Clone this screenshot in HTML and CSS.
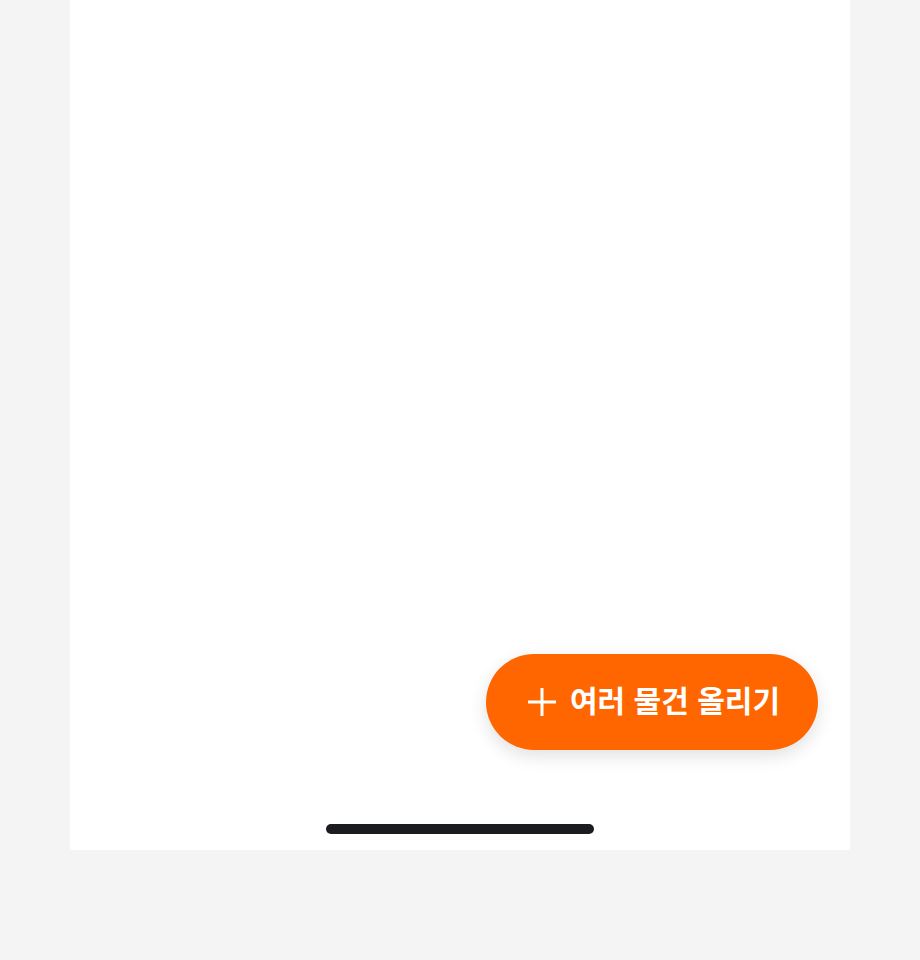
FILE: index.html
```html
<!DOCTYPE html>
<html lang="ko">
<head>
<meta charset="utf-8">
<link rel="stylesheet" href="styles.css">
</head>
<body>
<div class="frame">
  <div class="content"></div>
  <div class="fab-row">
    <button class="fab">
      <svg class="plus" width="30" height="30" viewBox="0 0 30 30"><path d="M15 1V29M1 15H29" stroke="#fff" stroke-width="3" fill="none"/></svg>
      <span class="fab-label">여러 물건 올리기</span>
    </button>
  </div>
  <div class="home-bar"><div class="home-indicator"></div></div>
</div>
</body>
</html>
```
FILE: styles.css
```css
html, body { margin: 0; padding: 0; }
body {
  background: #f4f4f4;
  font-family: "Noto Sans CJK KR", "Noto Sans", sans-serif;
}
.frame {
  width: 780px;
  height: 850px;
  margin: 0 auto;
  background: #fff;
  display: flex;
  flex-direction: column;
}
.content { flex: 1; }
.fab-row {
  display: flex;
  justify-content: flex-end;
  padding-right: 32px;
}
.fab {
  height: 96px;
  width: 332px;
  border: none;
  border-radius: 48px;
  background: #ff6600;
  color: #fff;
  display: flex;
  align-items: center;
  justify-content: flex-start;
  gap: 13px;
  padding: 0 0 0 41px;
  box-sizing: border-box;
  box-shadow: 0 6px 18px rgba(0,0,0,0.12);
  font-family: inherit;
  cursor: pointer;
}
.plus { display: block; flex: none; }
.fab-label {
  font-size: 30px;
  font-weight: 700;
  line-height: 1;
  letter-spacing: 0;
  margin-bottom: 6px;
}
.home-bar {
  height: 100px;
  display: flex;
  justify-content: center;
  align-items: flex-end;
  padding-bottom: 16px;
  box-sizing: border-box;
}
.home-indicator {
  width: 268px;
  height: 10px;
  border-radius: 5px;
  background: #1b1c20;
}
```
